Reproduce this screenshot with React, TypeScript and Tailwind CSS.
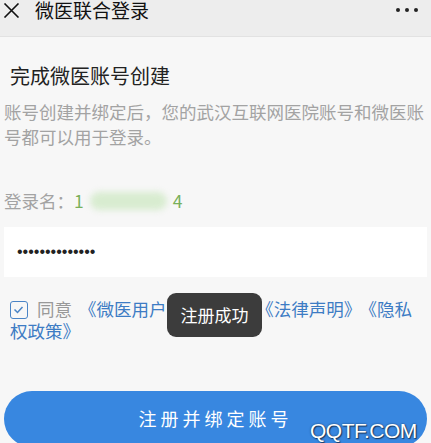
const CN = { fontFamily: '"Noto Sans CJK SC", "Noto Sans", sans-serif' };

export default function App() {
  return (
    <div className="relative h-[443px] w-[431px] overflow-hidden bg-[#f7f7f7]" style={CN}>
      {/* 顶部栏 */}
      <div className="flex h-[37px] items-start border-b border-[#e2e2e2] bg-[#ededed]">
        <svg className="ml-[3px] mt-[3px]" width="17" height="15" viewBox="0 0 17 15">
          <path d="M1.5 0.5 L15.5 14.5 M15.5 0.5 L1.5 14.5" stroke="#111" strokeWidth="1.6" fill="none" />
        </svg>
        <span className="ml-[15px] text-[19px] leading-[19px] text-[#111]">微医联合登录</span>
        <div className="ml-auto mr-[13px] mt-[8px] flex gap-[5px]">
          <span className="h-[4px] w-[4px] rounded-full bg-[#222]" />
          <span className="h-[4px] w-[4px] rounded-full bg-[#222]" />
          <span className="h-[4px] w-[4px] rounded-full bg-[#222]" />
        </div>
      </div>

      <div className="px-[4px]">
        <h1 className="ml-[6px] mt-[26px] text-[20px] leading-[25px] text-[#222]">完成微医账号创建</h1>
        <p className="mt-[11px] text-[17.5px] leading-[25px] text-[#a3a3a3]">
          账号创建并绑定后，您的武汉互联网医院账号和微医账号都可以用于登录。
        </p>

        <div className="mt-[40px] flex items-center text-[17.5px] leading-[24px] text-[#a3a3a3]">
          <span>登录名：</span>
          <span className="text-[#79b05a]">1</span>
          <span className="mx-[6px] h-[18px] w-[77px] rounded-full bg-[#d8ecd0] blur-[3px]" />
          <span className="text-[#79b05a]">4</span>
        </div>

        <div className="mt-[14px] flex h-[50px] items-center bg-white pl-[13px]">
          <span
            className="text-[16px] text-[#222]"
            style={{ fontFamily: '"Liberation Sans", Arial, sans-serif' }}
          >
            ••••••••••••••
          </span>
        </div>

        <p className="ml-[6px] mr-[8px] mt-[21px] text-[17.5px] leading-[22px] text-[#3d7cc4]">
          <span className="mr-[9px] inline-block h-[18px] w-[18px] translate-y-[3px] rounded-[3px] border-[1.5px] border-[#4a84c6] align-top">
            <svg width="15" height="15" viewBox="0 0 15 15">
              <path d="M3.5 7.5 L6.5 10.5 L11.5 5" stroke="#4a84c6" strokeWidth="1.5" fill="none" />
            </svg>
          </span>
          <span className="text-[#999]">同意</span>
          <span className="ml-[7px]">《微医用户注册协议》</span>
          <span className="ml-[11px]">《法律声明》</span>
          <span className="ml-[7px]">《隐私权政策》</span>
        </p>

        <button className="mt-[49px] flex h-[56px] w-full items-center justify-center rounded-full bg-[#3887e0] pb-[2px] text-[18px] tracking-[4px] text-white">
          注册并绑定账号
        </button>
      </div>

      {/* 提示 */}
      <div className="absolute left-[167px] top-[293px] flex h-[44px] w-[95px] items-center justify-center rounded-[9px] bg-[#3c3c3c] text-[17px] text-white">
        注册成功
      </div>

      <span
        className="absolute left-[310px] top-[415px] text-[21px] tracking-[-0.5px] text-white"
        style={{ fontFamily: '"Liberation Sans", Arial, sans-serif', textShadow: "0 0 2px #1a3a60, 1px 1px 1px #1a3a60" }}
      >
        QQTF.COM
      </span>
    </div>
  );
}
